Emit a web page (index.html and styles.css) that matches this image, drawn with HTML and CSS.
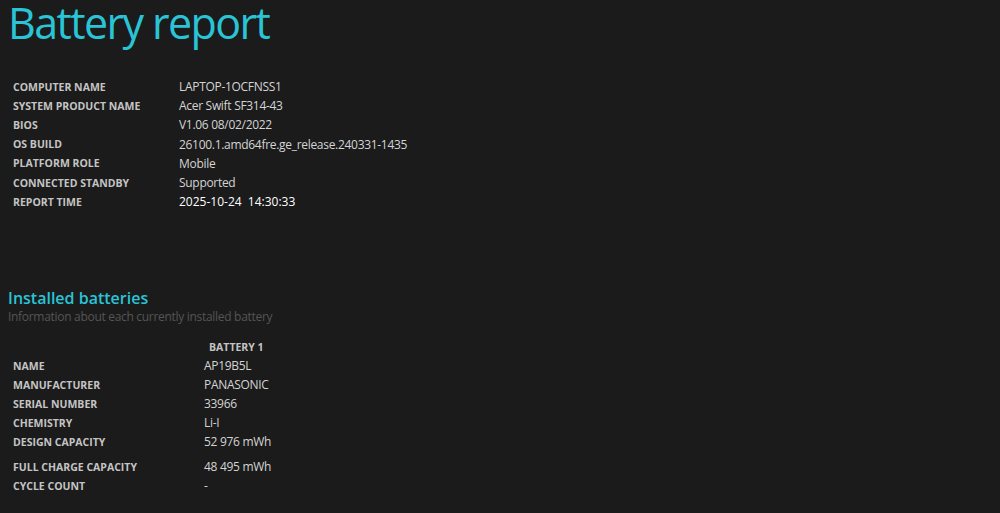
FILE: index.html
```html
<!DOCTYPE html>
<html>
<head>
<meta charset="utf-8">
<link rel="stylesheet" href="styles.css">
</head>
<body>
<h1 class="title">Battery report</h1>
<table class="info">
<tr><td class="label">COMPUTER NAME</td><td class="value">LAPTOP-1OCFNSS1</td></tr>
<tr><td class="label">SYSTEM PRODUCT NAME</td><td class="value">Acer Swift SF314-43</td></tr>
<tr><td class="label">BIOS</td><td class="value">V1.06 08/02/2022</td></tr>
<tr><td class="label">OS BUILD</td><td class="value">26100.1.amd64fre.ge_release.240331-1435</td></tr>
<tr><td class="label">PLATFORM ROLE</td><td class="value">Mobile</td></tr>
<tr><td class="label">CONNECTED STANDBY</td><td class="value">Supported</td></tr>
<tr><td class="label">REPORT TIME</td><td class="value strong">2025-10-24&nbsp;&nbsp;14:30:33</td></tr>
</table>
<h2 class="section">Installed batteries</h2>
<div class="subtitle">Information about each currently installed battery</div>
<table class="batt">
<tr class="head"><td class="label"></td><td class="label">BATTERY 1</td></tr>
<tr><td class="label">NAME</td><td class="value">AP19B5L</td></tr>
<tr><td class="label">MANUFACTURER</td><td class="value">PANASONIC</td></tr>
<tr><td class="label">SERIAL NUMBER</td><td class="value">33966</td></tr>
<tr><td class="label">CHEMISTRY</td><td class="value">Li-I</td></tr>
<tr><td class="label">DESIGN CAPACITY</td><td class="value">52 976 mWh</td></tr>
<tr class="tall"><td class="label">FULL CHARGE CAPACITY</td><td class="value">48 495 mWh</td></tr>
<tr><td class="label">CYCLE COUNT</td><td class="value">-</td></tr>
</table>
</body>
</html>
```
FILE: styles.css
```css
html, body {
  margin: 0;
  background: #1b1b1b;
}
body {
  padding: 0 8px;
  font-family: "Open Sans", "Noto Sans", sans-serif;
  color: #d9d9d9;
}
.title {
  margin: 0;
  font-size: 43px;
  font-weight: 400;
  line-height: 46px;
  color: #2ac4d7;
  letter-spacing: -1.6px;
}
.info {
  margin-top: 31px;
  border-collapse: collapse;
}
td {
  padding: 0;
  height: 19.2px;
  vertical-align: middle;
}
.label {
  font-size: 10.5px;
  font-weight: 700;
  color: #c4c4c4;
  padding-left: 5px;
  white-space: nowrap;
}
.info .label { width: 166px; }
.value {
  font-size: 12px;
  color: #d4d4d4;
  letter-spacing: -0.3px;
}
.value.strong { color: #ffffff; letter-spacing: 0; }
.section {
  margin: 77px 0 0;
  font-size: 16px;
  font-weight: 600;
  color: #2ac4d7;
  line-height: 20px;
}
.subtitle {
  font-size: 12px;
  color: #555555;
  line-height: 18px;
  letter-spacing: -0.3px;
}
.batt {
  margin-top: 12px;
  border-collapse: collapse;
}
.batt td { height: 19px; }
.batt .label:first-child { width: 191px; }
.batt .head td { height: 18px; }
.batt .tall td { height: 19px; padding-top: 6px; }
```
